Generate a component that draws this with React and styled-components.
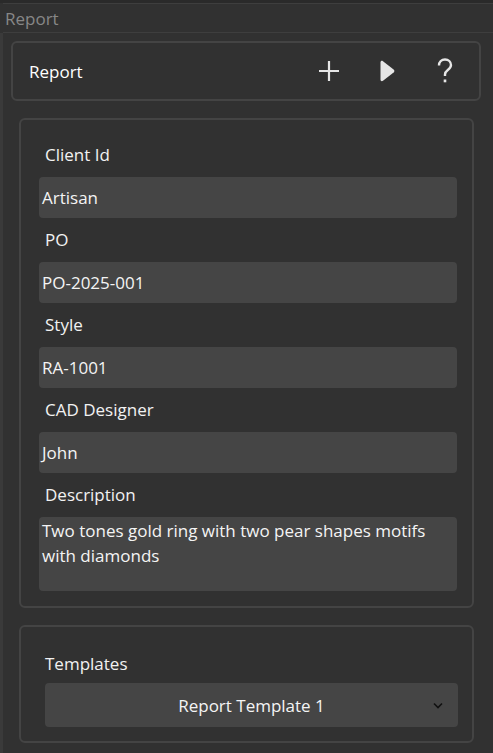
import React from "react";
import styled, { createGlobalStyle } from "styled-components";

const Global = createGlobalStyle`
  html, body { margin: 0; padding: 0; background: #313131; }
  body { font-family: "Segoe UI", "Open Sans", "Noto Sans", sans-serif; }
  * { box-sizing: border-box; }
`;

const Window = styled.div`
  width: 493px;
  height: 753px;
  background: #313131;
  border-top: 3px solid #2a2a2a;
  display: flex;
  flex-direction: column;
  overflow: hidden;
`;

const TitleBar = styled.div`
  height: 30px;
  border-top: 1px solid #3e3e3e;
  border-bottom: 1px solid #3e3e3e;
  padding-left: 2px;
  display: flex;
  align-items: center;
  color: #878787;
  font-size: 17px;
  margin-left: 3px;
`;

const Body = styled.div`
  flex: 1;
  display: flex;
  flex-direction: column;
  gap: 17px;
  padding: 8px 19px 0 11px;
  border-left: 3px solid #3a3a3a;
`;

const Card = styled.div`
  border: 2px solid #444444;
  border-radius: 6px;
  background: #313131;
`;

const HeaderCard = styled(Card)`
  margin-left: -3px;
  margin-right: -7px;
  height: 60px;
  display: flex;
  align-items: center;
  padding: 0 22px 0 16px;
`;

const HeaderTitle = styled.div`
  color: #ffffff;
  font-size: 17px;
  flex: 1;
`;

const IconRow = styled.div`
  display: flex;
  align-items: center;
  gap: 34px;
`;

const IconButton = styled.div`
  width: 24px;
  height: 24px;
  display: flex;
  align-items: center;
  justify-content: center;
  color: #e6e6e6;
`;

const FormCard = styled(Card)`
  margin-left: 5px;
  padding: 23px 15px 15px 18px;
  display: flex;
  flex-direction: column;
`;

const Label = styled.div`
  color: #f2f2f2;
  font-size: 17px;
  padding-left: 6px;
  height: 24px;
  line-height: 24px;
  margin-bottom: 10px;
`;

const Field = styled.div`
  background: #454545;
  border-radius: 4px;
  height: 41px;
  color: #f4f4f4;
  font-size: 17px;
  padding: 0 3px;
  display: flex;
  align-items: center;
  margin-bottom: 10px;
  ${(p) =>
    p.$multi &&
    `
    height: 74px;
    align-items: flex-start;
    line-height: 25px;
    padding: 1px 20px 0 3px;
    margin-bottom: 0;
  `}
`;

const TemplateCard = styled(Card)`
  margin-left: 5px;
  padding: 25px 14px 14px 24px;
  display: flex;
  flex-direction: column;
`;

const TemplateLabel = styled(Label)`
  padding-left: 0;
  margin-bottom: 7px;
`;

const Select = styled.div`
  background: #454545;
  border-radius: 4px;
  height: 44px;
  position: relative;
  display: flex;
  align-items: center;
  justify-content: center;
  color: #f4f4f4;
  font-size: 17px;
`;

const Chevron = styled.svg`
  position: absolute;
  right: 15px;
  top: 50%;
  margin-top: -3px;
`;

const fields = [
  ["Client Id", "Artisan"],
  ["PO", "PO-2025-001"],
  ["Style", "RA-1001"],
  ["CAD Designer", "John"],
];

export default function App() {
  return (
    <>
      <Global />
      <Window>
        <TitleBar>Report</TitleBar>
        <Body>
          <HeaderCard>
            <HeaderTitle>Report</HeaderTitle>
            <IconRow>
              <IconButton>
                <svg width="22" height="22" viewBox="0 0 22 22">
                  <path d="M11 1v20M1 11h20" stroke="#e6e6e6" strokeWidth="2.2" />
                </svg>
              </IconButton>
              <IconButton>
                <svg width="16" height="22" viewBox="0 0 16 22">
                  <path d="M1.5 2.5 C1.5 1 2.7 0.4 4 1.2 L14.6 9.6 C15.6 10.4 15.6 11.6 14.6 12.4 L4 20.8 C2.7 21.6 1.5 21 1.5 19.5 Z" fill="#e6e6e6" />
                </svg>
              </IconButton>
              <IconButton>
                <svg width="16" height="26" viewBox="0 0 16 26">
                  <path d="M2 7.5 C2 3.8 4.6 1.5 8 1.5 C11.4 1.5 14 3.8 14 7 C14 9.6 12.4 10.8 10.8 12 C9.2 13.2 8 14.2 8 16.5 L8 18" stroke="#e6e6e6" strokeWidth="2.4" fill="none" />
                  <rect x="6.7" y="21.5" width="2.6" height="2.8" fill="#e6e6e6" />
                </svg>
              </IconButton>
            </IconRow>
          </HeaderCard>
          <FormCard>
            {fields.map(([l, v]) => (
              <React.Fragment key={l}>
                <Label>{l}</Label>
                <Field>{v}</Field>
              </React.Fragment>
            ))}
            <Label>Description</Label>
            <Field $multi>
              Two tones gold ring with two pear shapes motifs with diamonds
            </Field>
          </FormCard>
          <TemplateCard>
            <TemplateLabel>Templates</TemplateLabel>
            <Select>
              Report Template 1
              <Chevron width="10" height="7" viewBox="0 0 10 7">
                <path d="M1 1.5l4 4 4-4" stroke="#111" strokeWidth="1.6" fill="none" />
              </Chevron>
            </Select>
          </TemplateCard>
        </Body>
      </Window>
    </>
  );
}
